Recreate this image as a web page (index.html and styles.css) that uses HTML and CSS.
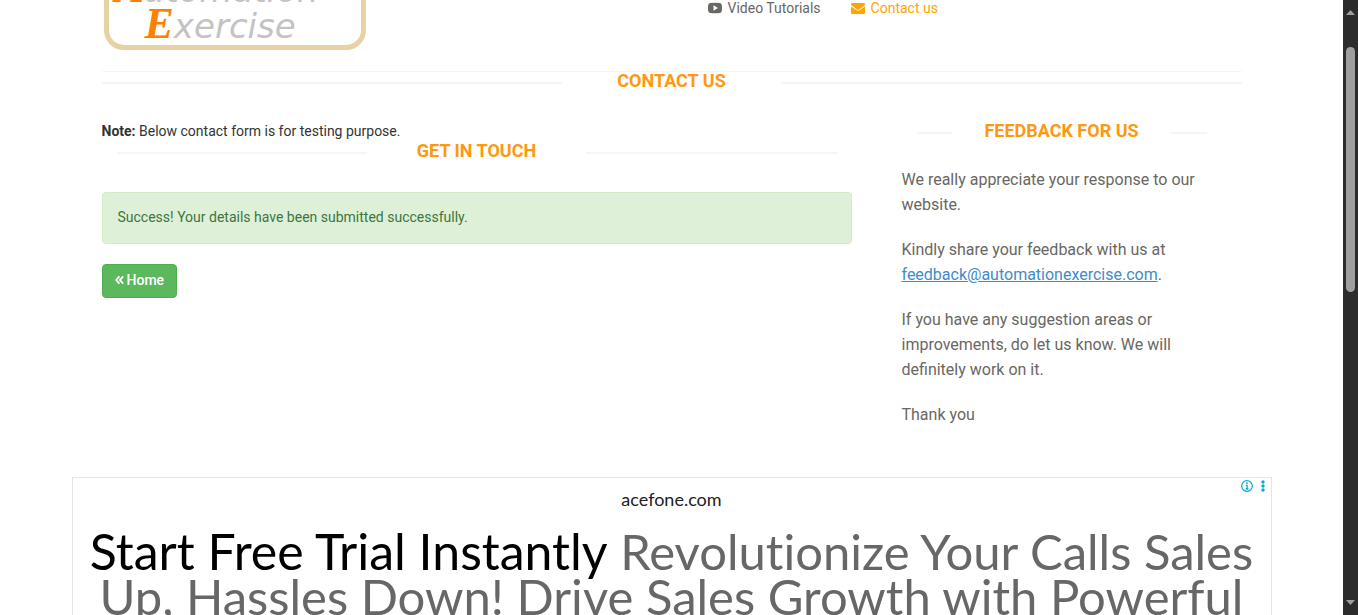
FILE: index.html
```html
<!DOCTYPE html>
<html lang="en">
<head>
<meta charset="utf-8">
<title>Automation Exercise - Contact Us</title>
<meta name="viewport" content="width=device-width, initial-scale=1">
<link rel="stylesheet" href="styles.css">
</head>
<body>
<div class="viewport">
  <div class="page">
    <header class="container">
      <div class="header-row">
        <a class="logo" href="#" aria-label="Automation Exercise">
          <span class="logo-frame">
            <span class="logo-line logo-line-top"><b>A</b>utomation</span>
            <span class="logo-line"><b>E</b>xercise</span>
          </span>
        </a>
        <nav class="nav">
          <a href="#"><svg width="14" height="12" viewBox="0 0 14 12"><path fill="currentColor" fill-rule="evenodd" d="M2.500 1Q7 .5 11.500 1Q13.400 1 13.800 3Q14.200 6 13.800 9Q13.400 11 11.500 11Q7 11.500 2.500 11Q.6 11 .2 9Q-.2 6 .2 3Q.6 1 2.500 1ZM5.500 3.200V8.800L10 6Z"/></svg>Video Tutorials</a>
          <a href="#" class="active"><svg width="14" height="12" viewBox="0 0 14 12"><path fill="currentColor" d="M1.200 1H12.800Q14 1 14 2.200Q14 3.300 12.800 4.100L8.300 7.200Q7 8.100 5.700 7.200L1.200 4.100Q0 3.300 0 2.200Q0 1 1.200 1ZM0 4.500L5.200 8.100Q7 9.300 8.800 8.100L14 4.500V10.800Q14 12 12.800 12H1.200Q0 12 0 10.800Z"/></svg>Contact us</a>
        </nav>
      </div>
    </header>

    <main class="container">
      <h2 class="title title-page">Contact Us</h2>
      <div class="columns">
        <section class="contact-form">
          <p class="note"><b>Note:</b> Below contact form is for testing purpose.</p>
          <h2 class="title title-form">Get In Touch</h2>
          <div class="alert" role="status">Success! Your details have been submitted successfully.</div>
          <a class="btn" href="#"><svg width="9" height="10" viewBox="0 0 9 10"><path fill="none" stroke="currentColor" stroke-width="1.900" d="M4.400 1.300L1.200 5L4.400 8.700M8.200 1.300L5 5L8.200 8.700"/></svg>Home</a>
        </section>
        <aside class="contact-info">
          <h2 class="title title-info">Feedback For Us</h2>
          <address>
            <p>We really appreciate your response to our website.</p>
            <p>Kindly share your feedback with us at <a href="mailto:feedback@automationexercise.com">feedback@automationexercise.com</a>.</p>
            <p>If you have any suggestion areas or improvements, do let us know. We will definitely work on it.</p>
            <p>Thank you</p>
          </address>
        </aside>
      </div>
    </main>

    <section class="ad" aria-label="Advertisement">
      <div class="ad-controls">
        <button type="button" aria-label="Ad information"><svg width="12" height="12" viewBox="0 0 12 12"><circle cx="6" cy="6" r="5.300" fill="none" stroke="currentColor" stroke-width="1.200"/><circle cx="6" cy="3.200" r=".9" fill="currentColor"/><path fill="none" stroke="currentColor" stroke-width="1.300" d="M4.700 5.300H6.100V9M4.600 9H7.500"/></svg></button>
        <button type="button" aria-label="Ad options"><svg width="4" height="12" viewBox="0 0 4 12"><g fill="currentColor"><circle cx="2" cy="2" r="1.700"/><circle cx="2" cy="6" r="1.700"/><circle cx="2" cy="10" r="1.700"/></g></svg></button>
      </div>
      <a class="ad-url" href="#">acefone.com</a>
      <p class="ad-text"><a href="#">Start Free Trial Instantly</a> Revolutionize Your Calls Sales Up, Hassles Down! Drive Sales Growth with Powerful</p>
    </section>
  </div>

  <div class="scrollbar" aria-hidden="true">
    <svg width="9" height="5" viewBox="0 0 9 5"><path fill="#9f9f9f" d="M0 5L4.500 0L9 5Z"/></svg>
    <div class="track"><div class="thumb"></div></div>
    <svg width="9" height="5" viewBox="0 0 9 5"><path fill="#9f9f9f" d="M0 0L4.500 5L9 0Z"/></svg>
  </div>
</div>
</body>
</html>
```
FILE: styles.css
```css
* { box-sizing: border-box; }

body {
  margin: 0;
  background: #fff;
  color: #333;
  font: 14px/18px Roboto, sans-serif;
}

h2, p { margin: 0; }
a { color: inherit; text-decoration: none; }

.viewport {
  display: flex;
  height: 100vh;
  overflow: hidden;
}

.page { flex: 1; min-width: 0; }

.container {
  max-width: 1170px;
  margin: 0 auto;
  padding: 0 15px;
}

/* Header */
.header-row {
  display: grid;
  grid-template-columns: 1fr 2fr;
  height: 72px;
  border-bottom: 1px solid #f5f5f5;
}

.logo {
  display: flex;
  align-items: flex-end;
  height: 50px;
  padding-left: 2px;
  overflow: hidden;
}

.logo-frame {
  width: 262px;
  padding: 0 0 1px 36px;
  border: 5px solid #e6d2a3;
  border-radius: 20px;
}

.logo-line {
  display: block;
  color: #c3c3c3;
  font: italic 34px/36px "DejaVu Sans", sans-serif;
  white-space: nowrap;
}

.logo-line-top { margin-left: -30px; }

.logo-line b {
  color: #ff8000;
  font: italic bold 44px/30px "Liberation Serif", serif;
}

.nav {
  display: flex;
  align-items: flex-start;
  gap: 30px;
  padding-left: 226px;
  color: #696763;
}

.nav a {
  display: flex;
  align-items: center;
  gap: 6px;
  line-height: 16px;
}

.nav .active { color: #ffa500; }

/* Section titles with rules at both sides */
.title {
  display: flex;
  align-items: center;
  gap: 50px;
  margin-bottom: 32px;
  color: #fe980f;
  font-size: 18px;
  font-weight: 700;
  line-height: 18px;
  text-transform: uppercase;
  white-space: nowrap;
}

.title::before,
.title::after {
  content: "";
  flex: 1;
  height: 2px;
  margin-top: 4px;
  background: #f5f5f5;
}

.title-page { gap: 55px; }
.title-form { margin-left: 15px; margin-right: 15px; }
.title-info { gap: 32px; margin: 0 15px 27px; }

/* Columns */
.columns {
  display: grid;
  grid-template-columns: 25fr 12fr;
  gap: 30px;
}

.note { margin-bottom: 2px; }

.contact-info { padding: 0 20px; }

.alert {
  margin-bottom: 20px;
  padding: 15px 15px 17px;
  border: 1px solid #d6e9c6;
  border-radius: 4px;
  background: #dff0d8;
  color: #3c763d;
}

.btn {
  display: inline-flex;
  align-items: center;
  gap: 3px;
  padding: 6px 12px 8px;
  border: 1px solid #4cae4c;
  border-radius: 4px;
  background: #5cb85c;
  color: #fff;
  font-weight: 500;
}

address {
  color: #696763;
  font-size: 16px;
  font-style: normal;
  line-height: 25px;
}

address p { margin-bottom: 20px; }
address a { color: #428bca; text-decoration: underline; }

/* Advertisement */
.ad {
  position: relative;
  max-width: 1200px;
  margin: 30px auto 0;
  padding: 12px 0 0;
  border: 1px solid #e5e5e5;
  font-family: Lato, sans-serif;
  text-align: center;
}

.ad-controls {
  position: absolute;
  top: 2px;
  right: 6px;
  display: flex;
  gap: 8px;
}

.ad-controls button {
  display: flex;
  padding: 0;
  border: 0;
  background: none;
  color: #00aecd;
}

.ad-url {
  display: block;
  color: #202124;
  font-size: 18px;
}

.ad-text {
  margin-top: 21px;
  padding: 0 12px;
  color: #676767;
  font-size: 49px;
  font-variant-ligatures: none;
  line-height: 45px;
}

.ad-text a {
  color: #000;
  font-size: 50px;
}

/* Scrollbar */
.scrollbar {
  display: flex;
  flex-direction: column;
  align-items: center;
  width: 15px;
  padding: 10px 0;
  background: #2c2c2c;
}

.track {
  flex: 1;
  width: 9px;
  padding: 32px 0;
}

.thumb {
  height: 47%;
  border-radius: 5px;
  background: #9f9f9f;
}
```
